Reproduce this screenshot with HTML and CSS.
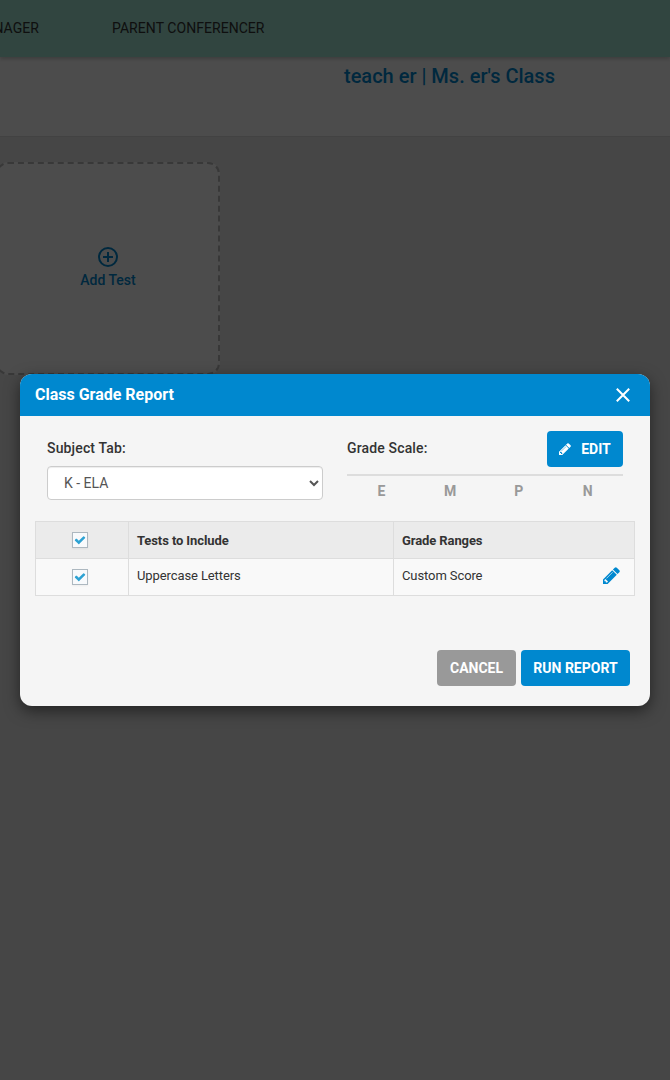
FILE: index.html
```html
<!DOCTYPE html>
<html lang="en">
<head>
<meta charset="utf-8">
<title>Class Grade Report</title>
<link rel="stylesheet" href="styles.css">
</head>
<body>
<div class="page">
  <nav class="topnav">
    <span class="nav-item nav-item-first">MANAGER</span>
    <span class="nav-item">PARENT CONFERENCER</span>
  </nav>
  <header class="class-header"><h1 class="class-name">teach er | Ms. er's Class</h1></header>
  <main class="content">
    <div class="add-card">
      <svg class="add-icon" viewBox="0 0 20 20"><circle cx="10" cy="10" r="9"/><path d="M10 5v10M5 10h10"/></svg>
      <span>Add Test</span>
    </div>
  </main>
</div>
<div class="scrim">
  <section class="modal">
    <div class="modal-head">
      <h2 class="modal-title">Class Grade Report</h2>
      <svg class="close" viewBox="0 0 14 14"><path d="M.8.8l12.4 12.4M13.2.8L.8 13.2"/></svg>
    </div>
    <div class="modal-body">
      <div class="fields">
        <div class="field">
          <label class="label" for="subject">Subject Tab:</label>
          <select class="select" id="subject"><option>K - ELA</option></select>
        </div>
        <div class="field">
          <div class="scale-head">
            <span class="label">Grade Scale:</span>
            <button class="btn btn-edit"><svg class="pencil-small" viewBox="0 0 1536 1536"><path d="M363 1408l91-91-235-235-91 91v107h128v128h107zM886 480q0-22-22-22-10 0-17 7l-542 542q-7 7-7 17 0 22 22 22 10 0 17-7l542-542q7-7 7-17zM832 288l416 416-832 832h-416v-416zM1515 384q0 53-37 90l-166 166-416-416 166-165q36-38 90-38 53 0 91 38l235 234q37 39 37 91z"/></svg>EDIT</button>
          </div>
          <div class="scale"><span>E</span><span>M</span><span>P</span><span>N</span></div>
        </div>
      </div>
      <div class="table">
        <div class="row row-head">
          <div class="cell cell-check"><span class="check"><svg viewBox="0 0 1792 1792"><path d="M1671 566q0 40-28 68l-724 724-136 136q-28 28-68 28t-68-28l-136-136-362-362q-28-28-28-68t28-68l136-136q28-28 68-28t68 28l294 295 656-657q28-28 68-28t68 28l136 136q28 28 28 68z"/></svg></span></div>
          <div class="cell">Tests to Include</div>
          <div class="cell">Grade Ranges</div>
        </div>
        <div class="row">
          <div class="cell cell-check"><span class="check"><svg viewBox="0 0 1792 1792"><path d="M1671 566q0 40-28 68l-724 724-136 136q-28 28-68 28t-68-28l-136-136-362-362q-28-28-28-68t28-68l136-136q28-28 68-28t68 28l294 295 656-657q28-28 68-28t68 28l136 136q28 28 28 68z"/></svg></span></div>
          <div class="cell">Uppercase Letters</div>
          <div class="cell cell-range"><span>Custom Score</span><svg class="pencil" viewBox="0 0 1536 1536"><path d="M363 1408l91-91-235-235-91 91v107h128v128h107zM886 480q0-22-22-22-10 0-17 7l-542 542q-7 7-7 17 0 22 22 22 10 0 17-7l542-542q7-7 7-17zM832 288l416 416-832 832h-416v-416zM1515 384q0 53-37 90l-166 166-416-416 166-165q36-38 90-38 53 0 91 38l235 234q37 39 37 91z"/></svg></div>
        </div>
      </div>
      <div class="actions">
        <button class="btn btn-cancel">CANCEL</button>
        <button class="btn btn-run">RUN REPORT</button>
      </div>
    </div>
  </section>
</div>
</body>
</html>
```
FILE: styles.css
```css
* { box-sizing: border-box; }
body { margin: 0; font-family: Roboto, sans-serif; font-size: 14px; color: #333; }
h1, h2 { margin: 0; }

.page { height: 1080px; overflow: hidden; background: #eaeaea; }
.topnav {
  position: relative;
  height: 57px;
  display: flex;
  justify-content: flex-start;
  gap: 73px;
  padding-top: 20px;
  background: #a3e6d5;
  box-shadow: 0 2px 4px rgba(0, 0, 0, .2);
  line-height: 16px;
  letter-spacing: .05px;
}
.nav-item { white-space: nowrap; }
.nav-item-first { width: 39px; display: flex; justify-content: flex-end; }
.class-header { height: 80px; padding: 7px 0 0 344px; background: #fff; border-bottom: 1px solid #dcdcdc; }
.class-name { font-size: 20px; line-height: 24px; font-weight: 500; color: #0088cf; }
.content { padding-top: 25px; }
.add-card {
  width: 224px;
  height: 213px;
  margin-left: -4px;
  display: flex;
  flex-direction: column;
  align-items: center;
  gap: 5px;
  padding-top: 83px;
  border: 2px dashed #bcbcbc;
  border-radius: 12px;
  background: #fff;
  color: #0088cf;
  font-weight: 500;
  line-height: 16px;
}
.add-icon { width: 20px; height: 20px; fill: none; stroke: currentColor; stroke-width: 2; }

.scrim { position: absolute; inset: 0; padding: 374px 20px 0; background: rgba(0, 0, 0, .7); }
.modal {
  height: 332px;
  border-radius: 12px;
  overflow: hidden;
  background: #f5f5f5;
  box-shadow: 0 5px 15px rgba(0, 0, 0, .5);
}
.modal-head {
  height: 42px;
  display: flex;
  align-items: center;
  justify-content: space-between;
  padding: 0 20px 0 15px;
  background: #0088cf;
  color: #fff;
}
.modal-title { font-size: 16px; line-height: 20px; font-weight: 700; }
.close { width: 14px; height: 14px; fill: none; stroke: #fff; stroke-width: 2; }
.modal-body { padding: 15px 15px 20px; }
.fields { display: grid; grid-template-columns: 276px 276px; gap: 24px; padding: 0 12px; height: 90px; }
.label { display: block; font-weight: 500; line-height: 20px; letter-spacing: .15px; }
.field > .label { padding-top: 7px; margin-bottom: 8px; }
.select {
  display: block;
  width: 276px;
  height: 34px;
  padding: 0 0 0 12px;
  border: 1px solid #ccc;
  border-radius: 4px;
  background: #fff;
  box-shadow: inset 0 1px 1px rgba(0, 0, 0, .075);
  color: #555;
  font: 14px Roboto, sans-serif;
}
.scale-head { display: flex; justify-content: space-between; height: 43px; }
.scale-head .label { padding-top: 7px; }
.btn {
  height: 36px;
  padding: 0;
  border: 0;
  border-radius: 4px;
  display: flex;
  align-items: center;
  justify-content: center;
  background: #0088cf;
  color: #fff;
  font: 700 14px/20px Roboto, sans-serif;
}
.btn-edit { width: 76px; gap: 10px; }
.pencil-small { width: 12px; height: 12px; fill: #fff; }
.scale {
  display: grid;
  grid-template-columns: repeat(4, 1fr);
  padding: 5px 1px 0 0;
  border-top: 2px solid #ddd;
  color: #999;
  font-weight: 700;
  line-height: 20px;
  text-align: center;
}
.table { width: 600px; border: 1px solid #ddd; background: #f9f9f9; font-size: 13px; line-height: 18px; letter-spacing: -.1px; }
.row { display: grid; grid-template-columns: 92px 265px 241px; height: 36px; }
.row-head { height: 37px; border-bottom: 1px solid #ddd; background: #ebebeb; font-weight: 700; }
.cell { padding: 8px; border-left: 1px solid #ddd; }
.row-head .cell { padding-top: 10px; }
.cell.cell-check, .row-head .cell-check { display: flex; justify-content: center; align-items: center; padding: 0 4px 0 0; border-left: 0; }
.cell-range { display: flex; justify-content: space-between; padding-right: 14px; }
.check {
  width: 16px;
  height: 16px;
  display: flex;
  align-items: center;
  justify-content: center;
  border: 1px solid #adb8c0;
  background: #f8fafc;
  box-shadow: 0 1px 2px rgba(0, 0, 0, .05);
}
.check svg { width: 12px; height: 12px; margin-bottom: 1px; fill: #2da2d3; }
.pencil { width: 17px; height: 17px; fill: #0088cf; }
.actions { display: flex; justify-content: flex-end; gap: 5px; padding: 54px 5px 0 0; }
.btn-cancel { width: 79px; background: #999; }
.btn-run { width: 109px; }
```
